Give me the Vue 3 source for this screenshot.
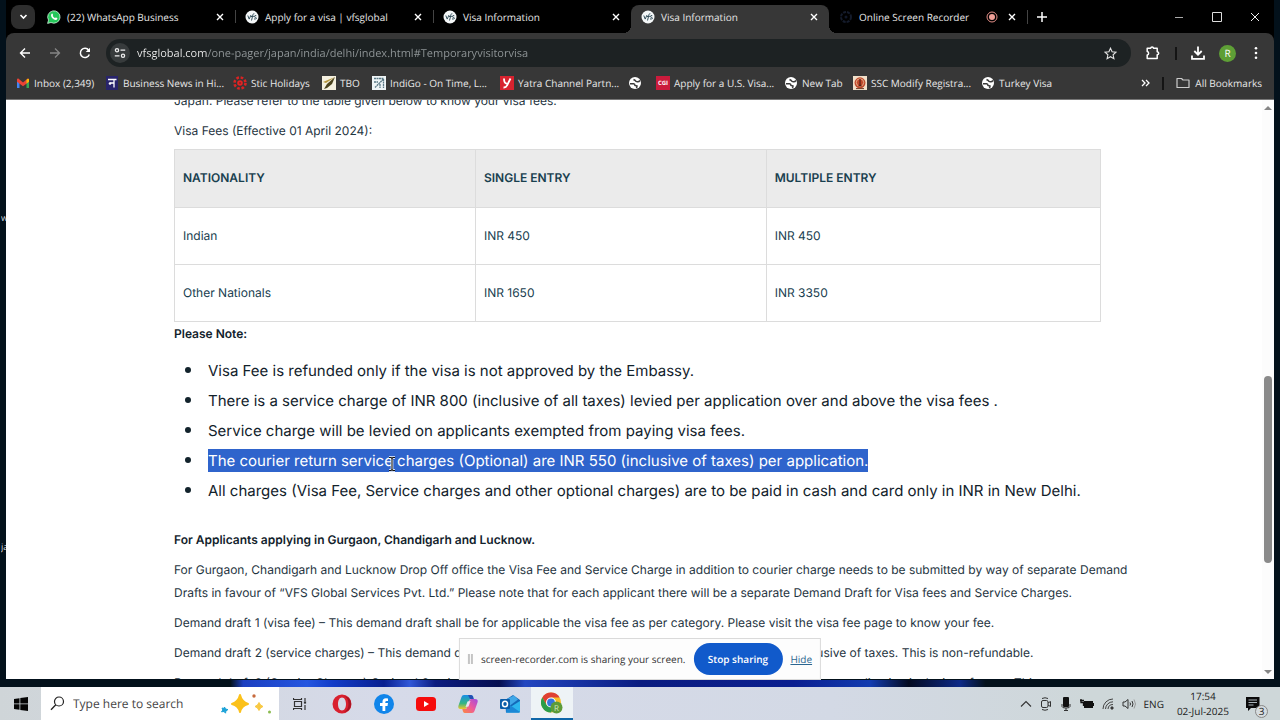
<script setup>
import { ref } from 'vue'

// browser tabs
const tabs = ref([
  { id: 1, title: '(22) WhatsApp Business', icon: 'whatsapp' },
  { id: 2, title: 'Apply for a visa | vfsglobal', icon: 'vfs', line: true },
  { id: 3, title: 'Visa Information', icon: 'vfs', line: true },
  { id: 4, title: 'Visa Information', icon: 'vfs' },
  { id: 5, title: 'Online Screen Recorder', icon: 'recorder', recording: true }
])
const activeTab = ref(4)

const url = ref('vfsglobal.com/one-pager/japan/india/delhi/index.html#Temporaryvisitorvisa')
const search = ref('')
const sharing = ref(true)

// bookmarks bar, size = slot width class
const bookmarks = [
  { title: 'Inbox (2,349)', icon: 'gmail', size: 'medium' },
  { title: 'Business News in Hi...', icon: 'news', size: 'wide' },
  { title: 'Stic Holidays', icon: 'stic', size: 'medium' },
  { title: 'TBO', icon: 'tbo', size: 'short' },
  { title: 'IndiGo - On Time, L...', icon: 'indigo', size: 'wide' },
  { title: 'Yatra Channel Partn...', icon: 'yatra', size: 'wide' },
  { title: '', icon: 'globe', size: 'bare' },
  { title: 'Apply for a U.S. Visa...', icon: 'cgi', size: 'wide' },
  { title: 'New Tab', icon: 'globe', size: 'small' },
  { title: 'SSC Modify Registra...', icon: 'ssc', size: 'wide' },
  { title: 'Turkey Visa', icon: 'globe', size: 'medium' }
]

const fees = [
  { nationality: 'Indian', single: 'INR 450', multiple: 'INR 450' },
  { nationality: 'Other Nationals', single: 'INR 1650', multiple: 'INR 3350' }
]

const notes = [
  { text: 'Visa Fee is refunded only if the visa is not approved by the Embassy.' },
  { text: 'There is a service charge of INR 800 (inclusive of all taxes) levied per application over and above the visa fees .' },
  { text: 'Service charge will be levied on applicants exempted from paying visa fees.' },
  { text: 'The courier return service charges (Optional) are INR 550 (inclusive of taxes) per application.', selected: true },
  { text: 'All charges (Visa Fee, Service charges and other optional charges) are to be paid in cash and card only in INR in New Delhi.' }
]
</script>

<template>
  <div class="desktop">
    <span class="desk-label first">w</span>
    <span class="desk-label second">ja</span>

    <div class="window">
      <!-- tab strip -->
      <div class="tabstrip">
        <button class="tab-search" aria-label="Search tabs">
          <svg width="9" height="9" viewBox="0 0 9 9"><path d="M1.5 3l3 3 3-3" fill="none" stroke="#fff" stroke-width="1.6" /></svg>
        </button>
        <div v-for="tab in tabs" :key="tab.id" class="tab" :class="{ active: tab.id === activeTab, line: tab.line }">
          <button class="tab-main" @click="activeTab = tab.id">
            <svg v-if="tab.icon === 'whatsapp'" width="14" height="14" viewBox="0 0 14 14">
              <path d="M.6 13.4l.9-3.3A6.2 6.2 0 1 1 4 12.5z" fill="#25c75a" stroke="#e8fff0" stroke-width=".7" />
              <path d="M4.7 3.8c.5-.4.8-.2 1 .3l.4.9c.1.4-.5.8-.3 1.1.5.9 1.2 1.5 2.1 1.9.4.1.7-.7 1.1-.5l1.2.6c.4.3 0 1.3-.6 1.6-2.4 1-6-2.5-5.5-4.7.1-.5.3-.9.6-1.2z" fill="#fff" />
            </svg>
            <svg v-else-if="tab.icon === 'vfs'" width="14" height="14" viewBox="0 0 14 14">
              <circle cx="7" cy="7" r="6.5" fill="#f4f7f8" />
              <path d="M2.8 5.5l1.4 3.6L6 5M6.5 10.5l1.5-6q.3-1 1.3-.8M6 6.5h2.8M11.3 5.7q-1.7-.6-1.9.5t1.4 1.3-.2 1.6l-1.6-.2" fill="none" stroke="#36515d" stroke-width="1" />
            </svg>
            <svg v-else width="14" height="14" viewBox="0 0 14 14">
              <circle cx="7" cy="7" r="5" fill="none" stroke="#141b2b" stroke-width="2" stroke-dasharray="3 1" />
              <circle cx="7" cy="7" r="1.5" fill="#11182a" />
            </svg>
            <span>{{ tab.title }}</span>
          </button>
          <svg v-if="tab.recording" width="12" height="12" viewBox="0 0 12 12">
            <circle cx="6" cy="6" r="5" fill="none" stroke="#e58f88" />
            <circle cx="6" cy="6" r="3" fill="#f0a098" />
          </svg>
          <button class="tab-close" aria-label="Close tab">
            <svg width="8" height="8" viewBox="0 0 8 8"><path d="M1 1l6 6M7 1L1 7" stroke="#fff" stroke-width="1.4" /></svg>
          </button>
        </div>
        <button class="new-tab" aria-label="New tab">
          <svg width="10" height="10" viewBox="0 0 10 10"><path d="M5 0v10M0 5h10" stroke="#fff" stroke-width="1.5" /></svg>
        </button>
        <div class="controls">
          <button aria-label="Minimize"><svg width="10" height="10" viewBox="0 0 10 10"><path d="M1 5.5h8" stroke="#aaa" /></svg></button>
          <button aria-label="Maximize"><svg width="10" height="10" viewBox="0 0 10 10"><path d="M.5.5h9v9h-9z" fill="none" stroke="#ddd" /></svg></button>
          <button aria-label="Close"><svg width="10" height="10" viewBox="0 0 10 10"><path d="M1 1l8 8M9 1L1 9" stroke="#eee" /></svg></button>
        </div>
      </div>

      <!-- toolbar -->
      <div class="toolbar">
        <button class="nav" aria-label="Back">
          <svg width="12" height="12" viewBox="0 0 12 12"><path d="M11 6H2M6 1.5L1.5 6 6 10.5" fill="none" stroke="#fff" stroke-width="1.4" /></svg>
        </button>
        <button class="nav" aria-label="Forward">
          <svg width="12" height="12" viewBox="0 0 12 12"><path d="M1 6h9M6 1.5L10.5 6 6 10.5" fill="none" stroke="#858585" stroke-width="1.3" /></svg>
        </button>
        <button class="nav" aria-label="Reload">
          <svg width="12" height="12" viewBox="0 0 12 12"><path d="M10.3 7.5A4.6 4.6 0 1 1 9.7 3.2" fill="none" stroke="#fff" stroke-width="1.5" /><path d="M11 .8v4.3H6.7z" fill="#fff" /></svg>
        </button>
        <div class="omnibox">
          <button class="site-info" aria-label="Site information">
            <svg width="12" height="12" viewBox="0 0 12 12" fill="none" stroke="#eee" stroke-width="1.3"><circle cx="3" cy="3.2" r="1.6" /><path d="M6.5 3.2h4.7M.8 8.8h4.7" /><circle cx="9" cy="8.8" r="1.6" /></svg>
          </button>
          <input v-model="url" type="text" aria-label="Address bar" spellcheck="false" />
          <button aria-label="Bookmark this page">
            <svg width="13" height="13" viewBox="0 0 13 13"><path d="M6.5 1.2l1.6 3.6 3.9.4-2.9 2.6.8 3.9-3.4-2-3.4 2 .8-3.9L1 5.2l3.9-.4z" fill="none" stroke="#e3e3e3" stroke-width="1.1" /></svg>
          </button>
        </div>
        <div class="tools">
          <button aria-label="Extensions">
            <svg width="16" height="14" viewBox="0 0 16 14"><path d="M2.2 2.2h3.5c.2-1.600 2.600-1.600 2.800 0h3.700v3.500c2 .2 2 2.800 0 3v3.700h-10V9c1.900-.3 1.900-3.100 0-3.400z" fill="none" stroke="#fff" stroke-width="1.5" stroke-linejoin="round" /></svg>
          </button>
          <span class="bar"></span>
          <button aria-label="Downloads">
            <svg width="14" height="14" viewBox="0 0 14 14"><path d="M7 .5v8M3.3 5L7 8.7 10.7 5M1 9.5v3.3h12V9.5" fill="none" stroke="#fff" stroke-width="1.8" /></svg>
          </button>
          <button class="avatar" aria-label="Profile">R</button>
          <button class="menu" aria-label="Menu">
            <svg width="4" height="14" viewBox="0 0 4 14" fill="#fff"><circle cx="2" cy="2.2" r="1.3" /><circle cx="2" cy="7" r="1.3" /><circle cx="2" cy="11.8" r="1.3" /></svg>
          </button>
        </div>
      </div>

      <!-- bookmarks bar -->
      <nav class="bookmarks">
        <a v-for="(mark, i) in bookmarks" :key="i" href="#" :class="mark.size" :aria-label="mark.title || 'Bookmark'">
          <svg v-if="mark.icon === 'gmail'" width="14" height="14" viewBox="0 0 14 14">
            <path d="M1 3.5V12h2.500V6z" fill="#4285f4" /><path d="M13 3.500V12h-2.500V6z" fill="#34a853" /><path d="M1 3.200v2.600l6 4.400 6-4.400V3.200L12 2.300 7 6.400 2 2.300z" fill="#ea4335" /><path d="M10.500 4v3.500L13 5.800V3.200q-1-1.400-2.500.8z" fill="#fbbc04" />
          </svg>
          <svg v-else-if="mark.icon === 'news'" width="14" height="14" viewBox="0 0 14 14">
            <path d="M1 0h12v14H1z" fill="#28246b" /><path d="M3 3.500h8.500M9 3.500v8M9 7H5.200" fill="none" stroke="#fff" stroke-width="1.3" /><circle cx="5" cy="7.5" r="1.3" fill="#fff" />
          </svg>
          <svg v-else-if="mark.icon === 'stic'" width="14" height="14" viewBox="0 0 14 14">
            <circle cx="7" cy="7" r="2.8" fill="#e02424" /><circle cx="7" cy="7" r="5.5" fill="none" stroke="#d92323" stroke-width="2.6" stroke-dasharray="2.6 1.72" /><circle cx="7" cy="7" r=".8" fill="#641616" />
          </svg>
          <svg v-else-if="mark.icon === 'tbo'" width="14" height="14" viewBox="0 0 14 14">
            <path d="M0 0h14v14H0z" fill="#f4f0df" /><path d="M1 6l12-5-9 6z" fill="#b5963d" /><path d="M13 1L5 8l-3 5 3-1 5-4z" fill="#4b431d" />
          </svg>
          <svg v-else-if="mark.icon === 'indigo'" width="14" height="14" viewBox="0 0 14 14">
            <path d="M0 0h14v14H0z" fill="#eef4f6" /><path d="M2 2.500h9.500V12M3 11.500l8-8M2 6h4M8 8v4" fill="none" stroke="#5a7885" stroke-width="1.3" stroke-dasharray="2 .5" />
          </svg>
          <svg v-else-if="mark.icon === 'yatra'" width="14" height="14" viewBox="0 0 14 14">
            <path d="M0 0h14v14H0z" fill="#d8232f" /><path d="M4 2.500q0 5 3 5.200M10.500 2.500L7 9.500Q6 11.700 3.500 11.500" fill="none" stroke="#fff" stroke-width="1.8" />
          </svg>
          <span v-else-if="mark.icon === 'cgi'" class="cgi">CGI</span>
          <svg v-else-if="mark.icon === 'ssc'" width="14" height="14" viewBox="0 0 14 14">
            <path d="M0 0h14v14H0z" fill="#f1dfc9" /><circle cx="7" cy="6.8" r="5.5" fill="#c0492c" /><circle cx="7" cy="6.5" r="3.7" fill="none" stroke="#efc29a" stroke-width=".8" /><path d="M7 3v7M5.500 9.500h3" stroke="#5c2014" stroke-width="1.3" /><path d="M3 12.600h8" stroke="#6e3a24" />
          </svg>
          <svg v-else width="14" height="14" viewBox="0 0 14 14">
            <circle cx="7" cy="7" r="6" fill="#fff" /><path d="M12 4.300q-1 1.800-2.800 1.500T7 4.300L5.500 3.500M2 7.800h3.500q1.500.2 1.500 1.700l2 .6-.5 1.900" fill="none" stroke="#3a3a3a" stroke-width="1.5" />
          </svg>
          <span v-if="mark.title">{{ mark.title }}</span>
        </a>
        <div class="rest">
          <button aria-label="More bookmarks">
            <svg width="9" height="8" viewBox="0 0 9 8"><path d="M1 1l3 3-3 3M5 1l3 3-3 3" fill="none" stroke="#fff" stroke-width="1.3" /></svg>
          </button>
          <span class="bar"></span>
          <button>
            <svg width="14" height="12" viewBox="0 0 14 12"><path d="M1 1.500h4.500L7 3h6v7.500H1z" fill="none" stroke="#ccc" stroke-width="1.2" stroke-linejoin="round" /></svg>
            All Bookmarks
          </button>
        </div>
      </nav>

      <!-- web page -->
      <div class="viewport">
        <main class="page">
          <p class="cut">Japan. Please refer to the table given below to know your visa fees.</p>
          <p>Visa Fees (Effective 01 April 2024):</p>
          <table>
            <thead>
              <tr><th>NATIONALITY</th><th>SINGLE ENTRY</th><th>MULTIPLE ENTRY</th></tr>
            </thead>
            <tbody>
              <tr v-for="fee in fees" :key="fee.nationality">
                <td>{{ fee.nationality }}</td>
                <td>{{ fee.single }}</td>
                <td>{{ fee.multiple }}</td>
              </tr>
            </tbody>
          </table>
          <h4>Please Note:</h4>
          <ul>
            <li v-for="note in notes" :key="note.text">
              <span :class="{ selected: note.selected }">{{ note.text }}</span>
            </li>
          </ul>
          <h4>For Applicants applying in Gurgaon, Chandigarh and Lucknow.</h4>
          <p>
            For Gurgaon, Chandigarh and Lucknow Drop Off office the Visa Fee and Service Charge in addition to courier charge needs to be submitted by way of separate Demand<br />
            Drafts in favour of “VFS Global Services Pvt. Ltd.” Please note that for each applicant there will be a separate Demand Draft for Visa fees and Service Charges.
          </p>
          <p>Demand draft 1 (visa fee) – This demand draft shall be for applicable the visa fee as per category. Please visit the visa fee page to know your fee.</p>
          <p>Demand draft 2 (service charges) – This demand draft shall be for the service charge INR 800 per application inclusive of taxes. This is non-refundable.</p>
          <p>Demand draft 3 (Courier Charges) Optional Service – This demand draft shall be for courier charge of Rs. INR 550 per application inclusive of taxes. This</p>
        </main>
        <div class="scrollbar">
          <svg width="8" height="6" viewBox="0 0 8 6"><path d="M0 5l4-4 4 4z" fill="#858585" /></svg>
          <div class="track"><div class="thumb"></div></div>
          <svg width="8" height="6" viewBox="0 0 8 6"><path d="M0 1l4 4 4-4z" fill="#858585" /></svg>
        </div>
      </div>
    </div>

    <div class="wallpaper"></div>

    <!-- text cursor -->
    <svg class="cursor" width="8" height="16" viewBox="0 0 8 16">
      <path d="M1 1.500h2l1 1 1-1h2M4 2v12M1 14.500h2l1-1 1 1h2" fill="none" stroke="#fff" stroke-width="2.6" />
      <path d="M1 1.500h2l1 1 1-1h2M4 2v12M1 14.500h2l1-1 1 1h2" fill="none" stroke="#111" stroke-width="1.1" />
    </svg>

    <!-- screen sharing notice -->
    <div v-if="sharing" class="sharing">
      <span class="grip"></span>
      <span>screen-recorder.com is sharing your screen.</span>
      <button @click="sharing = false">Stop sharing</button>
      <a href="#" @click.prevent="sharing = false">Hide</a>
    </div>

    <!-- taskbar -->
    <footer class="taskbar">
      <button class="start" aria-label="Start">
        <svg width="14" height="14" viewBox="0 0 14 14"><path d="M0 2l5.500-.8v5.300H0zM6.300 1.100L14 0v6.500H6.300zM0 7.300h5.500v5.500L0 12zM6.300 7.300H14V14l-7.700-1.100z" fill="#050505" /></svg>
      </button>
      <label class="search">
        <svg width="15" height="15" viewBox="0 0 15 15"><circle cx="9" cy="5.5" r="4.5" fill="none" stroke="#222" stroke-width="1.2" /><path d="M5.800 8.700L1 13.700" stroke="#222" stroke-width="1.3" /></svg>
        <input v-model="search" type="text" placeholder="Type here to search" />
        <svg width="52" height="22" viewBox="0 0 52 22">
          <path d="M20 2q1.500 6.500 8 9-6.500 1.500-8 8-1.500-6.500-8-8 6.500-2.500 8-9z" fill="#fbc11b" stroke="#fbc11b" stroke-width="2" stroke-linejoin="round" />
          <path d="M39 9.500q1 3 4 4-3 1-4 4-1-3-4-4 3-1 4-4z" fill="#f8c944" stroke="#f8c944" stroke-linejoin="round" />
          <path d="M4.500 14l1 2 2.500.6-2 1.200-.5 2.400-1.500-1.700-2.500.3L2.800 17 2 15l2 .5z" fill="#1da3d8" stroke="#1da3d8" />
          <circle cx="34" cy="3" r="1.7" fill="#c76a3d" /><circle cx="49.5" cy="19" r="1.5" fill="#8bbb50" />
        </svg>
      </label>
      <div class="apps">
        <button aria-label="Task View">
          <svg width="14" height="14" viewBox="0 0 14 14" fill="none" stroke="#333" stroke-width="1.2"><path d="M.5 1v1.500h8V1M1.500 4.500h7v5h-7zM.5 13v-1.500h8V13M12 1v3M12 8v5" /><path d="M11.500 5h1v1h-1z" fill="#333" /></svg>
        </button>
        <button aria-label="Opera">
          <svg width="20" height="20" viewBox="0 0 20 20"><path fill-rule="evenodd" d="M10 .5a9.500 9.500 0 1 0 0 19 9.500 9.500 0 1 0 0-19zM10 3.500c2.500 0 4 2.900 4 6.500s-1.500 6.500-4 6.500S6 13.600 6 10s1.500-6.500 4-6.500z" fill="#d9202f" /><path d="M12 2q4.500 2 4.500 8t-4.500 8q7-1 7-8t-7-8z" fill="#a51424" /></svg>
        </button>
        <button aria-label="Facebook">
          <svg width="20" height="20" viewBox="0 0 20 20"><circle cx="10" cy="10" r="10" fill="#1185ea" /><path d="M8.500 17v-5H6V9h2.500V7.800q0-3.600 3.500-3.600l2 .2V7h-1.300q-1.400 0-1.400 1.300V9H14l-.5 3h-2.200v5z" fill="#fff" /></svg>
        </button>
        <button aria-label="YouTube">
          <svg width="20" height="14" viewBox="0 0 20 14"><rect width="20" height="14" rx="3.5" fill="#f60c0c" /><path d="M8 4l5 3-5 3z" fill="#fff" /></svg>
        </button>
        <button aria-label="Copilot">
          <svg width="20" height="20" viewBox="0 0 20 20">
            <defs>
              <linearGradient id="copA" x1="0" y1="0" x2="0" y2="1"><stop offset="0" stop-color="#188fe8" /><stop offset=".6" stop-color="#35b584" /><stop offset="1" stop-color="#f0c72b" /></linearGradient>
              <linearGradient id="copB" x1="1" y1="0" x2="0" y2="1"><stop offset="0" stop-color="#a24be0" /><stop offset=".5" stop-color="#ee5a9b" /><stop offset="1" stop-color="#fb8a3d" /></linearGradient>
            </defs>
            <path d="M6 1h7q1.500 0 2 1.500l.7 2.500H13q-1.500 0-2 1.500l-2.300 7Q8 15 6.500 15H3Q-.5 15 .5 11.500L3.500 3Q4 1 6 1z" fill="url(#copA)" />
            <path d="M14 19H7q-1.500 0-2-1.500L4.300 15H7q1.500 0 2-1.500l2.300-7Q12 5 13.500 5H17q3.500 0 2.500 3.500L16.500 17q-.5 2-2.500 2z" fill="url(#copB)" />
            <path d="M9.500 7.500l3-.5-2 5.500-3 .5z" fill="#e6e5f2" />
            <path d="M10 1h3q1.500 0 2 1.500l.7 2.500H12z" fill="#2450b4" />
          </svg>
        </button>
        <button aria-label="Outlook">
          <svg width="20" height="18" viewBox="0 0 20 18"><path d="M5 5l8-5 7 5v11q0 1.500-1.500 1.500H6z" fill="#1469b8" /><path d="M7 4l7-3.500 4 4-8 6z" fill="#3fa7e8" /><path d="M20 6L7 14v3.500h11.500Q20 17.500 20 16z" fill="#2cb6ee" /><path d="M7 8l13 9-1 .5H6z" fill="#1b87d6" /><rect y="4" width="10" height="10" rx="1" fill="#0a5ca9" /><ellipse cx="5" cy="9" rx="2.5" ry="2.8" fill="none" stroke="#fff" stroke-width="1.5" /></svg>
        </button>
        <button class="running" aria-label="Google Chrome">
          <svg width="22" height="22" viewBox="0 0 22 22">
            <circle cx="10" cy="10.5" r="10" fill="#f6bf26" /><path d="M1.300 5.500A10 10 0 0 1 18.700 5.500H10L5.700 13z" fill="#df4033" /><path d="M1.300 5.500A10 10 0 0 0 10 20.500l4.500-8L5.700 13z" fill="#2a9d4b" />
            <circle cx="10" cy="10.5" r="5" fill="#fff" /><circle cx="10" cy="10.5" r="3.9" fill="#3576de" /><circle cx="15.5" cy="15.5" r="6" fill="#5d9b38" />
            <text x="15.5" y="18.5" text-anchor="middle">R</text>
          </svg>
        </button>
      </div>
      <div class="tray">
        <svg width="12" height="12" viewBox="0 0 12 12"><path d="M1 8.500l5-5 5 5" fill="none" stroke="#333" stroke-width="1.1" /></svg>
        <svg width="12" height="14" viewBox="0 0 12 14" fill="none" stroke="#333"><rect x="1.5" y="3.5" width="6.5" height="7" rx="1.5" /><path d="M8 6l2.500-1.500v5L8 8M2 1.500q3-1.500 6 0M2 12.500q3 1.500 6 0" /></svg>
        <svg width="12" height="14" viewBox="0 0 12 14"><rect x="3" y="0" width="6" height="10" rx="1" fill="#111" /><path d="M2 7v2.500q0 1.500 4 1.500t4-1.500V7M6 11v2.500M4 13.500h4" fill="none" stroke="#333" /></svg>
        <svg width="14" height="12" viewBox="0 0 14 12"><path d="M4 3h9v2h1v3h-1v2H4z" fill="#111" /><path d="M0 2.500h4M1 1v3.500h2.500V8" fill="none" stroke="#111" stroke-width="1.3" /></svg>
        <svg width="12" height="12" viewBox="0 0 12 12" fill="none" stroke="#444"><path d="M1 11A10 10 0 0 1 11 1M3.500 11A7.500 7.500 0 0 1 11 3.800M6 11a5 5 0 0 1 5-4.500" /><circle cx="10" cy="10" r="1.2" fill="#222" /></svg>
        <svg width="14" height="12" viewBox="0 0 14 12" fill="none" stroke="#333"><path d="M1 4h2l3-2.500v9L3 8H1zM8 4.500q1 1.500 0 3M10 3q2 3 0 6" /><path d="M12 1.500q3 4.500 0 9" stroke="#999" /></svg>
        <span>ENG</span>
        <time class="clock"><span>17:54</span><span>02-Jul-2025</span></time>
        <button class="notify" aria-label="Notifications">
          <svg width="14" height="14" viewBox="0 0 14 14"><path d="M0 0h13.500v11H5l-3 3v-3H0z" fill="#0a0a0a" /><path d="M2.500 3h8.500M2.500 5.500h8.500M2.500 8h5" stroke="#aab4ba" /></svg>
          <span>3</span>
        </button>
      </div>
    </footer>
  </div>
</template>

<style>
body {
  margin: 0;
  background: #03111b;
}
</style>

<style scoped>
* {
  box-sizing: border-box;
}

.desktop {
  position: relative;
  display: flex;
  flex-direction: column;
  height: 100vh;
  overflow: hidden;
  background: #03111b;
  font-family: "Open Sans", "Noto Sans", sans-serif;
  font-size: 10px;
  text-rendering: geometricPrecision;
}

button {
  display: flex;
  align-items: center;
  justify-content: center;
  padding: 0;
  border: 0;
  background: none;
  color: inherit;
  font: inherit;
  white-space: nowrap;
  text-rendering: inherit;
}

input {
  min-width: 0;
  padding: 0;
  border: 0;
  outline: 0;
  background: none;
  text-rendering: inherit;
}

svg {
  display: block;
  flex: none;
}

.window {
  display: flex;
  flex: 1;
  flex-direction: column;
  min-height: 0;
  margin: 0 6px;
  background: #000;
}

.wallpaper {
  height: 7px;
  margin-top: 1px;
  background: linear-gradient(90deg, #03111b 18%, #1c3fc0 19%, #2456e0 24%, #123cc8 26%, #0a2090 30%, #3158d8 32%, #0c1c80 34%, #060f50 39%, #2246c0 41%, #0a1c80 50%, #0b1f90 62%, #123cb0 68%, #040a20 71%, #0d2a88 75%, #03111b 77%);
}

.desk-label {
  position: absolute;
  left: 1px;
  width: 5px;
  overflow: hidden;
  color: #cfd8de;
  font-size: 9px;
}

.first {
  top: 211px;
}

.second {
  top: 540px;
}

/* tabs */
.tabstrip {
  display: flex;
  align-items: center;
  height: 33px;
  padding-left: 5px;
  color: #e6e6e6;
}

.tab-search {
  width: 24px;
  height: 24px;
  margin-right: 2px;
  border-radius: 8px;
  background: #2e2e2e;
}

.tab {
  position: relative;
  display: flex;
  flex: 0 1 198px;
  align-items: center;
  align-self: stretch;
  gap: 9px;
  margin-top: 5px;
  padding: 0 10px 5px;
  min-width: 0;
}

.tab.line::before {
  content: "";
  position: absolute;
  left: 0;
  top: 5px;
  width: 1px;
  height: 13px;
  background: #444;
}

.tab.active {
  border-radius: 8px 8px 0 0;
  background: #373737;
}

.tab.active::before,
.tab.active::after {
  content: "";
  position: absolute;
  bottom: 0;
  width: 8px;
  height: 8px;
}

.tab.active::before {
  left: -8px;
  background: radial-gradient(circle at 0 0, #000 8px, #373737 8px);
}

.tab.active::after {
  right: -8px;
  background: radial-gradient(circle at 100% 0, #000 8px, #373737 8px);
}

.tab-main {
  flex: 1;
  justify-content: flex-start;
  gap: 6px;
  min-width: 0;
}

.tab-close {
  width: 10px;
  height: 14px;
}

.new-tab {
  width: 28px;
  height: 14px;
  border-left: 1px solid #444;
}

.controls {
  display: flex;
  margin-left: auto;
}

.controls button {
  width: 38px;
  height: 32px;
}

/* toolbar */
.toolbar {
  display: flex;
  align-items: center;
  height: 40px;
  padding: 0 12px 0 4px;
  border-radius: 8px 8px 0 0;
  background: #373737;
}

.nav {
  width: 30px;
  height: 28px;
}

.omnibox {
  display: flex;
  flex: 1;
  align-items: center;
  height: 28px;
  margin-left: 6px;
  padding: 0 14px 0 4px;
  border-radius: 14px;
  background: #1d2223;
}

.site-info {
  width: 20px;
  height: 20px;
  border-radius: 50%;
  background: #373b3c;
}

.omnibox input {
  flex: 1;
  height: 24px;
  margin-left: 7px;
  /* host is brighter than the path */
  background: linear-gradient(90deg, #f1f1f1 71px, #92989a 71px);
  background-clip: text;
  -webkit-text-fill-color: transparent;
  font: 11px "Open Sans", "Noto Sans", sans-serif;
}

.tools {
  display: flex;
  align-items: center;
  gap: 14px;
  margin-left: 14px;
}

.bar {
  width: 2px;
  height: 13px;
  background: #141414;
}

.avatar {
  width: 17px;
  height: 17px;
  border-radius: 50%;
  background: #5e9f36;
  color: #fff;
}

.menu {
  width: 12px;
}

/* bookmarks */
.bookmarks {
  display: flex;
  align-items: center;
  height: 27px;
  padding: 0 12px 6px 10px;
  border-bottom: 1px solid #777;
  background: #373737;
  color: #e8e8e8;
}

.bookmarks a {
  display: flex;
  align-items: center;
  gap: 4px;
  color: inherit;
  text-decoration: none;
  white-space: nowrap;
}

.bookmarks .wide {
  width: 128px;
}

.bookmarks .medium {
  width: 89px;
}

.bookmarks .small {
  width: 69px;
}

.bookmarks .short {
  width: 50px;
}

.bookmarks .bare {
  width: 28px;
}

.cgi {
  width: 14px;
  background: #cb1b3c;
  color: #fff;
  font-size: 6px;
  font-weight: 700;
  line-height: 14px;
  text-align: center;
}

.rest {
  display: flex;
  align-items: center;
  gap: 12px;
  margin-left: auto;
}

.rest button {
  gap: 5px;
}

/* page */
.viewport {
  display: flex;
  flex: 1;
  min-height: 0;
  overflow: hidden;
  background: #fff;
}

.page {
  flex: 1;
  min-width: 0;
  padding: 0 161px 0 168px;
  color: #1f353f;
  font: 12px/23px Inter, sans-serif;
}

p {
  margin: 0 0 7px;
  white-space: nowrap;
}

.cut {
  margin-top: -11px;
}

table {
  width: 100%;
  border-collapse: collapse;
  table-layout: fixed;
  color: #19404f;
}

th,
td {
  height: 57px;
  padding: 0 8px 2px;
  border: 1px solid #dcdcdc;
  text-align: left;
}

th {
  height: 58px;
  background: #ebebeb;
  font-weight: 600;
}

th:nth-child(1) {
  width: 32.5%;
}

th:nth-child(2) {
  width: 31.4%;
}

h4 {
  margin: 0 0 7px;
  color: #12222b;
  font-size: 12px;
  font-weight: 600;
}

ul {
  margin: 10px 0 23px;
  padding-left: 11px;
  color: #12222b;
  font-size: 15px;
  list-style: none;
  white-space: nowrap;
}

li {
  display: flex;
  align-items: center;
  gap: 17px;
  height: 30px;
}

li::before {
  content: "";
  width: 6px;
  height: 6px;
  border-radius: 50%;
  background: #12222b;
}

.selected {
  background: #2f64cc;
  color: #fff;
}

.scrollbar {
  display: flex;
  flex-direction: column;
  align-items: center;
  width: 12px;
  padding: 5px 0 4px;
  background: #fcfcfc;
}

.track {
  display: flex;
  flex: 1;
  flex-direction: column;
}

.track::before {
  content: "";
  flex: 265;
}

.track::after {
  content: "";
  flex: 106;
}

.thumb {
  flex: 187;
  width: 8px;
  border-radius: 4px;
  background: #8a8a8a;
}

.cursor {
  position: absolute;
  left: 388px;
  top: 456px;
}

/* sharing notice */
.sharing {
  position: absolute;
  left: 50%;
  bottom: 40px;
  display: flex;
  align-items: center;
  height: 42px;
  padding: 0 8px;
  border: 1px solid #dadada;
  background: #fdfdfd;
  color: #333;
  white-space: nowrap;
  transform: translateX(-50%);
}

.grip {
  width: 5px;
  height: 10px;
  margin-right: 8px;
  border: solid #c4c4c4;
  border-width: 0 2px;
}

.sharing button {
  width: 89px;
  height: 32px;
  margin: 0 8px;
  border-radius: 16px;
  background: #115acb;
  color: #fff;
  font-weight: 600;
}

.sharing a {
  color: #2c6690;
}

/* taskbar */
.taskbar {
  display: flex;
  height: 33px;
  background: linear-gradient(90deg, #cfd5d8, #d6dae9 30%, #d3d9e5 65%, #ced7d9 85%);
  color: #222;
}

.start {
  width: 41px;
}

.search {
  display: flex;
  align-items: center;
  width: 238px;
  padding: 0 7px 0 9px;
  background: #fff;
}

.search input {
  flex: 1;
  margin-left: 8px;
  font: 12px "Open Sans", "Noto Sans", sans-serif;
}

.search input::placeholder {
  color: #444;
}

.apps {
  display: flex;
}

.apps button {
  width: 42px;
}

.apps .running {
  border-bottom: 2px solid #0f67a8;
  background: #eef3f6;
}

.running text {
  fill: #d5e8c5;
  font-size: 8px;
}

.tray {
  display: flex;
  align-items: center;
  gap: 8px;
  margin-left: auto;
  padding-right: 14px;
}

.clock {
  display: flex;
  flex-direction: column;
  align-items: center;
  margin: 0 9px 0 5px;
  line-height: 15px;
}

.notify {
  position: relative;
  justify-content: flex-start;
  width: 20px;
  height: 24px;
}

.notify span {
  position: absolute;
  right: -2px;
  bottom: -2px;
  width: 13px;
  border: 1px solid #888;
  border-radius: 50%;
  background: #d6dcdf;
  line-height: 11px;
}
</style>
